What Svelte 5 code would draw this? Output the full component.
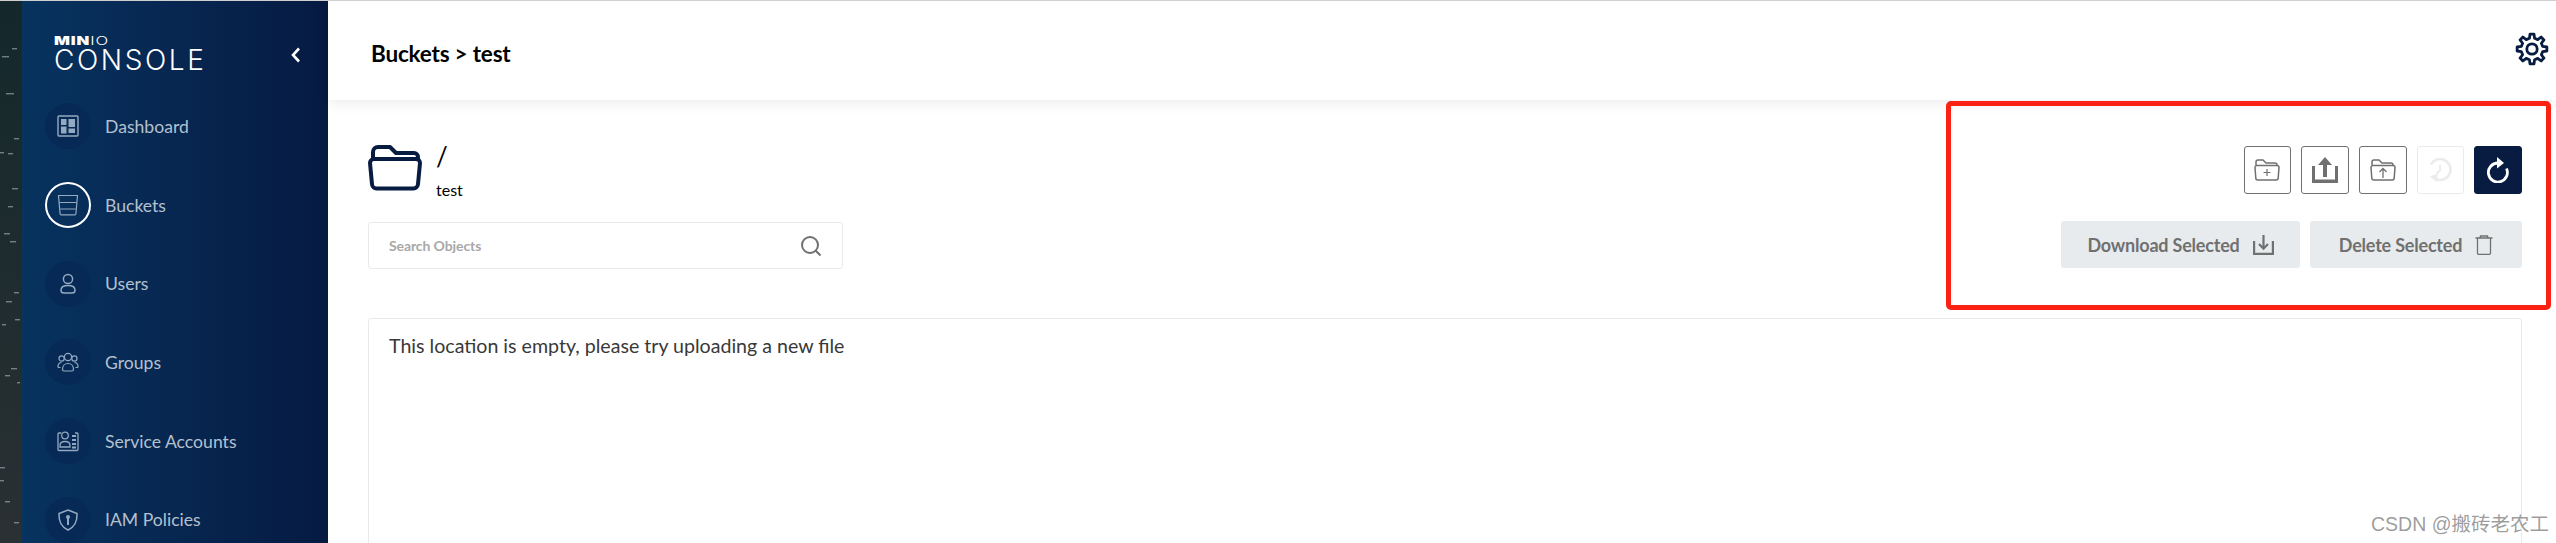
<script lang="ts">
	const specks = [
		[2, 55, 7], [12, 47, 5], [6, 92, 8], [14, 137, 5], [0, 151, 4], [8, 152, 5], [12, 187, 6], [8, 205, 5],
		[4, 232, 6], [10, 240, 6], [6, 300, 6], [14, 291, 5], [15, 318, 5], [2, 323, 4], [11, 367, 6], [5, 374, 5],
		[17, 381, 3], [0, 466, 5], [0, 479, 4], [5, 500, 5], [14, 521, 5]
	];

	function gearPath(cx: number, cy: number, outer: number, inner: number, teeth: number) {
		const step = (Math.PI * 2) / teeth;
		let d = '';
		for (let i = 0; i < teeth; i++) {
			const a = i * step - Math.PI / 2;
			const pts = [
				[inner, a - step * 0.3],
				[outer, a - step * 0.17],
				[outer, a + step * 0.17],
				[inner, a + step * 0.3]
			];
			for (const [r, t] of pts) {
				d += `${d ? 'L' : 'M'}${(cx + r * Math.cos(t)).toFixed(2)} ${(cy + r * Math.sin(t)).toFixed(2)}`;
			}
		}
		return d + 'Z';
	}

	const nav = [
		{ label: 'Dashboard', icon: 'dashboard' },
		{ label: 'Buckets', icon: 'buckets', active: true },
		{ label: 'Users', icon: 'users' },
		{ label: 'Groups', icon: 'groups' },
		{ label: 'Service Accounts', icon: 'accounts' },
		{ label: 'IAM Policies', icon: 'policies' }
	];
</script>

<div class="page">
	<div class="wallpaper">
		<svg width="22" height="543" viewBox="0 0 22 543">
			{#each specks as [x, y, w]}
				<rect {x} {y} width={w} height="1.4" fill="#aeb9bd" opacity="0.6" />
			{/each}
		</svg>
	</div>

	<aside class="sidebar">
		<div class="brand">
			<div class="logo">
				<div class="logo-top"><b>MIN</b><span>IO</span></div>
				<div class="logo-bottom">CONSOLE</div>
			</div>
			<svg class="collapse" width="10" height="16" viewBox="0 0 10 16">
				<path d="M8 1.5 2 8l6 6.5" fill="none" stroke="#fff" stroke-width="2.6" />
			</svg>
		</div>
		<nav>
			{#each nav as item}
				<div class="nav-item">
					<div class="circle" class:active={item.active}>
						<svg width="22" height="22" viewBox="0 0 22 22" fill="none" stroke="currentColor" stroke-width="1.2">
							{#if item.icon === 'dashboard'}
								<rect x="1" y="1" width="20" height="20" rx="1" stroke-width="1.4" />
								<rect x="4" y="4" width="5.5" height="6" fill="currentColor" stroke="none" />
								<rect x="4" y="11.5" width="5.5" height="7" fill="currentColor" stroke="none" />
								<rect x="11.5" y="4" width="6.5" height="8" fill="currentColor" stroke="none" />
								<rect x="11.5" y="13.5" width="6.5" height="4.5" fill="currentColor" stroke="none" />
							{:else if item.icon === 'buckets'}
								<path d="M1.5 1.5h19l-1.6 18.500a1 1 0 0 1-1 .8H4.100a1 1 0 0 1-1-.8z" />
								<path d="M2.400 8.500h17.200M3.400 15h15.200" />
							{:else if item.icon === 'users'}
								<circle cx="11" cy="6" r="4.600" stroke-width="1.500" />
								<path d="M4 17.200c0-3 3-4.600 7-4.600s7 1.600 7 4.600c0 2-1.500 2.800-3 2.800H7c-1.500 0-3-.8-3-2.800z" stroke-width="1.500" />
							{:else if item.icon === 'groups'}
								<circle cx="11" cy="6" r="3.600" />
								<circle cx="4.600" cy="7.500" r="2.600" />
								<circle cx="17.400" cy="7.500" r="2.600" />
								<path d="M5.500 18.500c0-3.500 2.400-6 5.500-6s5.500 2.500 5.500 6c0 1-.8 1.500-1.500 1.500H7c-.7 0-1.500-.5-1.500-1.500z" />
								<path d="M3.500 16.500H2c-.7 0-1.200-.5-1-1.500.3-2 1.700-3.500 3.500-3.500M18.500 16.500H20c.7 0 1.200-.5 1-1.500-.3-2-1.700-3.500-3.500-3.500" />
							{:else if item.icon === 'accounts'}
								<path d="M4.500 3H2a1 1 0 0 0-1 1v15.500a1 1 0 0 0 1 1h18a1 1 0 0 0 1-1V4a1 1 0 0 0-1-1h-2" stroke-width="1.300" />
								<circle cx="8" cy="5.500" r="3.300" stroke-width="1.300" />
								<path d="M3 15.500c0-2.500 2.200-4 5-4s5 1.500 5 4V17H3z" stroke-width="1.300" />
								<path d="M15 6h4M15 10h4M15 14h4M15 17.500h4" stroke-width="2.200" />
							{:else}
								<path d="M11 1 20 4.500c.3 8-1.700 13-9 16.500C3.700 17.500 1.700 12.500 2 4.500z" stroke-width="1.600" />
								<circle cx="11" cy="8" r="2" fill="currentColor" stroke="none" />
								<path d="M11 9v7" stroke-width="2" />
							{/if}
						</svg>
					</div>
					<span>{item.label}</span>
				</div>
			{/each}
		</nav>
	</aside>

	<main>
		<header>
			<h1>Buckets &gt; test</h1>
			<svg class="gear" width="34" height="34" viewBox="0 0 34 34" fill="none" stroke="#081c42" stroke-width="2.800" stroke-linejoin="round">
				<path d={gearPath(17, 17, 15, 11, 8)} />
				<circle cx="17" cy="17" r="5.200" />
			</svg>
		</header>

		<div class="content">
			<div class="toolbar">
				<div class="left">
					<div class="path-row">
						<svg width="54" height="46" viewBox="0 0 54 46" fill="none" stroke="#081c42" stroke-width="4">
							<path d="M5 14V7a5 5 0 0 1 5-5h12l6 6h18a4 4 0 0 1 4 4v3" stroke-linejoin="round" />
							<path d="M2 18a4 4 0 0 1 4-4h42a4 4 0 0 1 4 4l-2 21a4.500 4.500 0 0 1-4.500 4.500H8.500A4.500 4.500 0 0 1 4 39z" />
						</svg>
						<div class="path-text">
							<div class="slash">/</div>
							<div class="bucket">test</div>
						</div>
					</div>
					<div class="search">
						<span>Search Objects</span>
						<svg width="22" height="22" viewBox="0 0 22 22" fill="none" stroke="#707070" stroke-width="2">
							<circle cx="10" cy="10" r="8" />
							<path d="m15.500 15.500 5 5" />
						</svg>
					</div>
				</div>

				<div class="right">
					<div class="icon-row">
						<button class="icon-btn">
							<svg width="26" height="22" viewBox="0 0 26 22" fill="none" stroke="#707070" stroke-width="1.500">
								<path d="M2 6V3a2 2 0 0 1 2-2h5l3 3h9a2 2 0 0 1 2 2v1" />
								<path d="M1 8.500a2 2 0 0 1 2-2h20a2 2 0 0 1 2 2l-.8 10.500a2 2 0 0 1-2 2H3.800a2 2 0 0 1-2-2z" />
								<path d="M9.500 13.500h7M13 10v7" stroke-width="1.200" />
							</svg>
						</button>
						<button class="icon-btn">
							<svg width="26" height="26" viewBox="0 0 26 26" fill="#707070">
								<path d="M13 0 20 8h-5v12h-4V8H6z" />
								<path d="M0 9h3v13.500h20V9h3v17H0z" />
							</svg>
						</button>
						<button class="icon-btn">
							<svg width="26" height="22" viewBox="0 0 26 22" fill="none" stroke="#707070" stroke-width="1.500">
								<path d="M2 6V3a2 2 0 0 1 2-2h5l3 3h9a2 2 0 0 1 2 2v1" />
								<path d="M1 8.500a2 2 0 0 1 2-2h20a2 2 0 0 1 2 2l-.8 10.500a2 2 0 0 1-2 2H3.800a2 2 0 0 1-2-2z" />
								<path d="M13 19v-9M9.500 13 13 9.500l3.500 3.500" stroke-width="1.300" />
							</svg>
						</button>
						<button class="icon-btn disabled">
							<svg width="24" height="24" viewBox="0 0 24 24" fill="none" stroke="#ebebeb" stroke-width="2.600">
								<path d="M2.800 6.500A10.500 10.500 0 1 1 9 21.600" />
								<path d="M12 7v5.500l-3.500 3" stroke-width="1.800" />
								<path d="M10 15.500 2 18.500l6.500 5.500z" fill="#ebebeb" stroke="none" />
							</svg>
						</button>
						<button class="icon-btn primary">
							<svg width="24" height="26" viewBox="0 0 24 26" fill="none" stroke="#fff" stroke-width="2.800">
								<path d="M12 6A9.500 9.500 0 1 0 20.500 11.500" />
								<path d="M11 0l7 6-7 5.500z" fill="#fff" stroke="none" />
							</svg>
						</button>
					</div>
					<div class="action-row">
						<button class="action download">
							Download Selected
							<svg width="21" height="21" viewBox="0 0 21 21" fill="none" stroke="#707070" stroke-width="2.200">
								<path d="M1.100 7v12.900h18.800V7" />
								<path d="M10.500 1v13M6 10l4.500 4.700L15 10" />
							</svg>
						</button>
						<button class="action delete">
							Delete Selected
							<svg width="18" height="20" viewBox="0 0 18 20" fill="none" stroke="#707070" stroke-width="1.300">
								<path d="M.5 3h17M5 3l.5-2h7l.5 2" />
								<path d="M2.500 3v15a1.500 1.500 0 0 0 1.500 1.500h10a1.500 1.500 0 0 0 1.500-1.500V3" />
							</svg>
						</button>
					</div>
				</div>
			</div>

			<div class="empty">This location is empty, please try uploading a new file</div>
		</div>
	</main>

	<div class="highlight"></div>
	<div class="watermark">CSDN @搬砖老农工</div>
</div>

<style>
	:global(body) {
		margin: 0;
		background: #fff;
	}

	.page {
		position: relative;
		display: flex;
		width: 2556px;
		height: 543px;
		overflow: hidden;
		font-family: Lato, 'Noto Sans', sans-serif;
		border-top: 1px solid #cfcfcf;
		box-sizing: border-box;
	}

	.wallpaper {
		width: 22px;
		flex: none;
		background: linear-gradient(180deg, #14282b, #2a3033);
	}

	.wallpaper svg {
		display: block;
	}

	.sidebar {
		width: 306px;
		flex: none;
		background: linear-gradient(90deg, #07335f, #061a42);
		color: #fff;
	}

	.brand {
		display: flex;
		align-items: center;
		justify-content: space-between;
		height: 86px;
		padding: 22px 27px 0 32px;
		box-sizing: border-box;
	}

	.logo-top {
		font-family: Inter, sans-serif;
		font-size: 11.5px;
		line-height: 10px;
		letter-spacing: 0.6px;
		transform: scaleX(1.45);
		transform-origin: left;
	}

	.logo-top b {
		font-weight: 900;
	}

	.logo-top span {
		font-weight: 300;
	}

	.logo-bottom {
		font-family: Inter, sans-serif;
		font-weight: 300;
		font-size: 28px;
		line-height: 28px;
		letter-spacing: 2.6px;
	}

	nav {
		display: flex;
		flex-direction: column;
	}

	.nav-item {
		display: flex;
		align-items: center;
		height: 78.7px;
		padding-left: 23px;
		gap: 14px;
		font-size: 17.6px;
		color: #b4c0ce;
	}

	.circle {
		display: flex;
		align-items: center;
		justify-content: center;
		width: 46px;
		height: 46px;
		box-sizing: border-box;
		border-radius: 50%;
		background: #062a55;
		color: #94a9c0;
	}

	.circle.active {
		background: transparent;
		border: 2px solid #fff;
	}

	main {
		flex: 1;
		min-width: 0;
		color: #000;
	}

	header {
		display: flex;
		align-items: center;
		justify-content: space-between;
		height: 99px;
		padding: 0 7px 0 43px;
		box-shadow: 0 4px 12px rgba(0, 0, 0, 0.07);
	}

	h1 {
		margin: 6px 0 0;
		font-size: 22.5px;
		font-weight: 700;
		letter-spacing: -0.2px;
	}

	.gear {
		margin-top: -3px;
	}

	.content {
		padding: 43px 34px 0 40px;
	}

	.toolbar {
		display: flex;
		justify-content: space-between;
	}

	.path-row {
		display: flex;
		gap: 12px;
		height: 79px;
		align-items: flex-start;
		padding-top: 2px;
		box-sizing: border-box;
	}

	.path-text {
		padding-left: 2px;
	}

	.slash {
		font-size: 26px;
		line-height: 26px;
		margin-top: -2px;
	}

	.bucket {
		font-size: 16px;
		line-height: 18px;
		margin-top: 12px;
	}

	.search {
		display: flex;
		align-items: center;
		justify-content: space-between;
		width: 475px;
		height: 47px;
		box-sizing: border-box;
		border: 1px solid #eaeaea;
		border-radius: 3px;
		padding: 0 20px;
		font-size: 14px;
		font-weight: 700;
		letter-spacing: -0.1px;
		color: #a8a8a8;
	}

	.right {
		display: flex;
		flex-direction: column;
		align-items: flex-end;
		gap: 27px;
		padding-top: 3px;
	}

	.icon-row,
	.action-row {
		display: flex;
		gap: 10px;
	}

	button {
		display: flex;
		align-items: center;
		justify-content: center;
		padding: 0;
		font: inherit;
		border-radius: 3px;
		box-sizing: border-box;
	}

	.icon-btn {
		width: 47.7px;
		height: 48px;
		background: #fff;
		border: 1px solid #707070;
	}

	.icon-btn.disabled {
		border-color: #ebebeb;
	}

	.icon-btn.primary {
		background: #081c42;
		border-color: #081c42;
	}

	.action {
		height: 47px;
		gap: 13px;
		border: none;
		background: #e8ebed;
		color: #707070;
		font-size: 18px;
		font-weight: 700;
		letter-spacing: -0.2px;
	}

	.download {
		width: 239px;
	}

	.delete {
		width: 212px;
	}

	.empty {
		margin-top: 49px;
		height: 200px;
		padding: 14px 20px;
		border: 1px solid #eaeaea;
		border-radius: 3px;
		font-size: 19.6px;
		line-height: 26px;
		color: #393939;
	}

	.highlight {
		position: absolute;
		left: 1946px;
		top: 100px;
		width: 605px;
		height: 209px;
		box-sizing: border-box;
		border: 5px solid #fb2113;
		border-radius: 5px;
	}

	.watermark {
		position: absolute;
		left: 2371px;
		top: 511px;
		font-family: 'Liberation Sans', 'Noto Sans CJK SC', sans-serif;
		font-size: 19.5px;
		line-height: 24px;
		color: rgba(90, 90, 90, 0.6);
		white-space: nowrap;
	}
</style>
